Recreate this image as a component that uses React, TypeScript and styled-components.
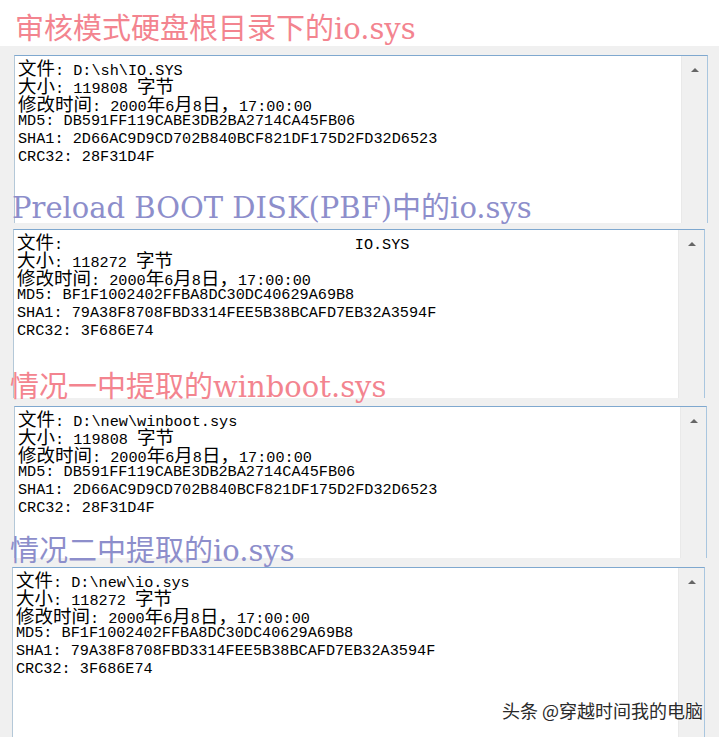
import styled, { createGlobalStyle } from "styled-components"

const GlobalStyle = createGlobalStyle`
    html, body {
        margin: 0;
        padding: 0;
        background: #f0f0f0;
    }
`

const Page = styled.div`
    position: relative;
    width: 719px;
    height: 737px;
    overflow: hidden;
    background: #f0f0f0;
`

const TitleStrip = styled.div`
    height: 46px;
    padding-top: 12px;
    box-sizing: border-box;
    background: #fff;
`

const Caption = styled.h2<{ $tone: "pink" | "violet"; $indent: number; $lift: number; $sink: number }>`
    position: relative;
    z-index: 1;
    margin: ${(p) => -p.$lift}px 0 ${(p) => -p.$sink}px;
    padding-left: ${(p) => p.$indent}px;
    height: 34px;
    line-height: 34px;
    font-family: "DejaVu Serif", "Noto Sans CJK SC", serif;
    font-size: 29px;
    font-weight: normal;
    white-space: nowrap;
    color: ${(p) => (p.$tone === "pink" ? "#f3848f" : "#8d8ecb")};
`

const Window = styled.div<{ $gap: number; $left: number; $right: number }>`
    padding: ${(p) => p.$gap}px ${(p) => p.$right}px 0 ${(p) => p.$left}px;
`

const TextBox = styled.div<{ $height: number }>`
    display: flex;
    height: ${(p) => p.$height}px;
    background: #fff;
    border-top: 1px solid #7fa8cf;
    border-left: 1px solid #b4c8d8;
    border-right: 1px solid #a9c6df;
    box-sizing: border-box;
    overflow: hidden;
`

const Content = styled.div`
    flex: 1;
    padding: 2px 0 0 3px;
    font-family: "Liberation Mono", monospace;
    font-size: 15.2px;
    color: #000;
`

const Line = styled.div`
    height: 18px;
    line-height: 18px;
    white-space: pre;
`

const Wide = styled.span`
    font-family: "Noto Sans CJK SC", sans-serif;
    font-size: 18.5px;
`

const ScrollBar = styled.div`
    width: 26px;
    background: #f0f0f0;
    border-left: 1px solid #e9e9e9;
    display: flex;
    justify-content: center;
    padding-top: 12px;
    box-sizing: border-box;
`

const UpArrow = styled.div`
    width: 0;
    height: 0;
    border-left: 4px solid transparent;
    border-right: 4px solid transparent;
    border-bottom: 4px solid #666;
`

const Watermark = styled.div`
    position: absolute;
    right: 16px;
    bottom: 16px;
    font-family: "Noto Sans CJK SC", sans-serif;
    font-size: 18px;
    line-height: 22px;
    color: #2a2a2a;
    text-shadow: 0 0 2px #fff, 0 0 2px #fff;
    white-space: nowrap;
`

const CJK = /([\u2e80-\u9fff\u3000-\u303f\uff00-\uffef]+)/

const Row = ({ text }: { text: string }) => (
    <Line>
        {text.split(CJK).map((part, i) =>
            CJK.test(part) ? <Wide key={i}>{part}</Wide> : part
        )}
    </Line>
)

const TIME = "修改时间: 2000年6月8日，17:00:00"

const SET_A = [
    "MD5: DB591FF119CABE3DB2BA2714CA45FB06",
    "SHA1: 2D66AC9D9CD702B840BCF821DF175D2FD32D6523",
    "CRC32: 28F31D4F",
]
const SET_B = [
    "MD5: BF1F1002402FFBA8DC30DC40629A69B8",
    "SHA1: 79A38F8708FBD3314FEE5B38BCAFD7EB32A3594F",
    "CRC32: 3F686E74",
]

const panels = [
    {
        title: "审核模式硬盘根目录下的io.sys",
        tone: "pink" as const,
        indent: 15, lift: 0, sink: 0,
        gap: 9, left: 14, right: 11, height: 168,
        lines: ["文件: D:\\sh\\IO.SYS", "大小: 119808 字节", TIME, ...SET_A],
    },
    {
        title: "Preload BOOT DISK(PBF)中的io.sys",
        tone: "violet" as const,
        indent: 12, lift: 32, sink: 2,
        gap: 6, left: 13, right: 14, height: 169,
        lines: ["文件:" + " ".repeat(32) + "IO.SYS", "大小: 118272 字节", TIME, ...SET_B],
    },
    {
        title: "情况一中提取的winboot.sys",
        tone: "pink" as const,
        indent: 10, lift: 28, sink: 6,
        gap: 8, left: 14, right: 12, height: 152,
        lines: ["文件: D:\\new\\winboot.sys", "大小: 119808 字节", TIME, ...SET_A],
    },
    {
        title: "情况二中提取的io.sys",
        tone: "violet" as const,
        indent: 10, lift: 24, sink: 10,
        gap: 9, left: 12, right: 14, height: 180,
        lines: ["文件: D:\\new\\io.sys", "大小: 118272 字节", TIME, ...SET_B],
    },
]

const App = () => {
    return (
        <>
            <GlobalStyle />
            <Page>
                {panels.map((p, i) => (
                    <section key={i}>
                        {i === 0 ? (
                            <TitleStrip>
                                <Caption $tone={p.tone} $indent={p.indent} $lift={0} $sink={0}>
                                    {p.title}
                                </Caption>
                            </TitleStrip>
                        ) : (
                            <Caption $tone={p.tone} $indent={p.indent} $lift={p.lift} $sink={p.sink}>
                                {p.title}
                            </Caption>
                        )}
                        <Window $gap={p.gap} $left={p.left} $right={p.right}>
                            <TextBox $height={p.height}>
                                <Content>
                                    {p.lines.map((l, j) => (
                                        <Row key={j} text={l} />
                                    ))}
                                </Content>
                                <ScrollBar>
                                    <UpArrow />
                                </ScrollBar>
                            </TextBox>
                        </Window>
                    </section>
                ))}
                <Watermark>头条 @穿越时间我的电脑</Watermark>
            </Page>
        </>
    )
}

export default App
